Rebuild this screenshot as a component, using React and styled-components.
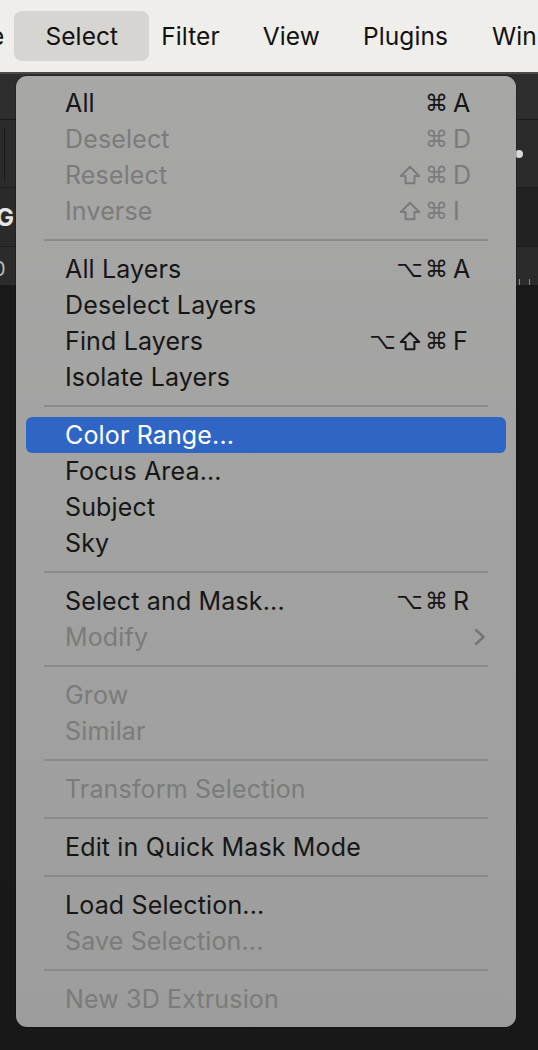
import React from "react";
import styled, { createGlobalStyle } from "styled-components";

const Global = createGlobalStyle`
  html, body { margin: 0; padding: 0; background: #181818; }
  body { font-family: Inter, "Noto Sans", "DejaVu Sans", sans-serif; -webkit-font-smoothing: antialiased; }
  #root { width: 538px; height: 1050px; overflow: hidden; }
`;

const Page = styled.div`
  position: relative;
  width: 538px;
  height: 1050px;
  background: #181818;
  overflow: hidden;
`;

const MenuBar = styled.div`
  height: 74px;
  background: #efeeea;
  border-bottom: 2px solid #4b4b4b;
  display: flex;
  align-items: center;
  box-sizing: border-box;
  white-space: nowrap;
`;

const BarItem = styled.div`
  flex: none;
  height: 50px;
  display: flex;
  align-items: center;
  padding: 0 ${(p) => p.$pad ?? 0}px;
  margin-left: ${(p) => p.$ml ?? 0}px;
  border-radius: 8px;
  font-size: 24.5px;
  letter-spacing: 0.1px;
  color: #111;
  background: ${(p) => (p.$active ? "#d6d5d1" : "transparent")};
`;

const Work = styled.div`
  display: flex;
  flex-direction: column;
`;

const Strip = styled.div`
  height: ${(p) => p.$h}px;
  background: ${(p) => p.$bg};
  border-bottom: ${(p) => (p.$line ? "1px solid #1b1b1b" : "none")};
  display: flex;
  justify-content: space-between;
  align-items: ${(p) => p.$align || "center"};
`;

const Side = styled.div`
  width: 16px;
  height: 100%;
  background: ${(p) => p.$bg || "transparent"};
  display: flex;
  align-items: ${(p) => p.$align || "center"};
  justify-content: flex-start;
  overflow: hidden;
  box-sizing: border-box;
`;

const RightSide = styled(Side)`
  width: 22px;
`;

const VLine = styled.div`
  width: 1px;
  height: 54px;
  margin-left: 4px;
  background: #1a1a1a;
`;

const Dot = styled.div`
  width: 8px;
  height: 8px;
  border-radius: 50%;
  background: #d9d9d9;
  margin-left: -1px;
`;

const StripText = styled.div`
  font-weight: 700;
  font-size: 24px;
  color: #e6e6e6;
  margin-left: -4px;
`;

const RulerText = styled.div`
  font-size: 20px;
  color: #bbb;
  margin-left: -7px;
  margin-top: 10px;
`;

const Ticks = styled.div`
  height: 6px;
  width: 100%;
  align-self: flex-end;
  background: repeating-linear-gradient(
    to right,
    transparent 0 3px,
    #8a8a8a 3px 4px,
    transparent 4px 10px
  );
`;

const Menu = styled.div`
  position: absolute;
  left: 16px;
  top: 76px;
  width: 500px;
  box-sizing: border-box;
  padding: 9px 10px 10px;
  border-radius: 11px;
  background: linear-gradient(#a7a7a6, #9c9d9c);
  box-shadow: 0 0 0 0.5px rgba(0, 0, 0, 0.35);
`;

const Row = styled.div`
  height: 36px;
  display: flex;
  align-items: center;
  border-radius: 6px;
  padding-left: 39px;
  font-size: 25px;
  letter-spacing: 0.15px;
  color: ${(p) => (p.$active ? "#ffffff" : p.$disabled ? "#7b7b7b" : "#161616")};
  background: ${(p) => (p.$active ? "#2f66c6" : "transparent")};
`;

const Label = styled.div`
  flex: 1;
  white-space: nowrap;
`;

const Shortcut = styled.div`
  display: flex;
  align-items: center;
`;

const Mod = styled.span`
  width: 27px;
  height: 36px;
  display: flex;
  align-items: center;
  justify-content: center;
  font-family: "DejaVu Sans", sans-serif;
  font-size: 23px;
`;

const Key = styled.span`
  width: 56px;
  padding-left: 3px;
  box-sizing: border-box;
  font-size: 25px;
`;

const Chevron = styled.div`
  width: 32px;
  display: flex;
  justify-content: flex-start;
`;

const Sep = styled.div`
  height: 22px;
  display: flex;
  align-items: center;
  padding: 0 18px;
  &::after {
    content: "";
    flex: 1;
    height: 1.5px;
    background: #8a8a8a;
  }
`;

function ShiftGlyph() {
  return (
    <svg width="22" height="20" viewBox="0 0 22 20">
      <path
        d="M11 1.8 L20.2 11 H15.4 V18.2 H6.6 V11 H1.8 Z"
        fill="none"
        stroke="currentColor"
        strokeWidth="2"
        strokeLinejoin="round"
      />
    </svg>
  );
}

const MODS = { cmd: "\u2318", opt: "\u2325" };

function Item({ label, mods = [], k, disabled, active, sub }) {
  return (
    <Row $disabled={disabled} $active={active}>
      <Label>{label}</Label>
      {k && (
        <Shortcut>
          {mods.map((m) => (
            <Mod key={m}>{m === "shift" ? <ShiftGlyph /> : MODS[m]}</Mod>
          ))}
          <Key>{k}</Key>
        </Shortcut>
      )}
      {sub && (
        <Chevron>
          <svg width="12" height="18" viewBox="0 0 12 18">
            <path d="M2 2 L9.5 9 L2 16" fill="none" stroke="#757575" strokeWidth="2.4" strokeLinecap="round" strokeLinejoin="round" />
          </svg>
        </Chevron>
      )}
    </Row>
  );
}

const groups = [
  [
    { label: "All", mods: ["cmd"], k: "A" },
    { label: "Deselect", mods: ["cmd"], k: "D", disabled: true },
    { label: "Reselect", mods: ["shift", "cmd"], k: "D", disabled: true },
    { label: "Inverse", mods: ["shift", "cmd"], k: "I", disabled: true },
  ],
  [
    { label: "All Layers", mods: ["opt", "cmd"], k: "A" },
    { label: "Deselect Layers" },
    { label: "Find Layers", mods: ["opt", "shift", "cmd"], k: "F" },
    { label: "Isolate Layers" },
  ],
  [
    { label: "Color Range...", active: true },
    { label: "Focus Area..." },
    { label: "Subject" },
    { label: "Sky" },
  ],
  [
    { label: "Select and Mask...", mods: ["opt", "cmd"], k: "R" },
    { label: "Modify", disabled: true, sub: true },
  ],
  [
    { label: "Grow", disabled: true },
    { label: "Similar", disabled: true },
  ],
  [{ label: "Transform Selection", disabled: true }],
  [{ label: "Edit in Quick Mask Mode" }],
  [
    { label: "Load Selection..." },
    { label: "Save Selection...", disabled: true },
  ],
  [{ label: "New 3D Extrusion", disabled: true }],
];

export default function App() {
  return (
    <Page>
      <Global />
      <MenuBar>
        <BarItem $ml={-10}>e</BarItem>
        <BarItem $active $ml={10} $pad={31}>Select</BarItem>
        <BarItem $ml={12}>Filter</BarItem>
        <BarItem $ml={43}>View</BarItem>
        <BarItem $ml={43}>Plugins</BarItem>
        <BarItem $ml={44}>Window</BarItem>
      </MenuBar>
      <Work>
        <Strip $h={45} $bg="#2d2d2d" $line />
        <Strip $h={67} $bg="#2b2b2b" $line>
          <Side>
            <VLine />
          </Side>
          <RightSide>
            <Dot />
          </RightSide>
        </Strip>
        <Strip $h={58} $bg="#2a2a2a" $line>
          <Side>
            <StripText>G</StripText>
          </Side>
          <RightSide $bg="#222222" />
        </Strip>
        <Strip $h={38} $bg="#2b2b2b" $align="stretch">
          <Side $align="flex-start">
            <RulerText>0</RulerText>
          </Side>
          <RightSide $align="flex-end">
            <Ticks />
          </RightSide>
        </Strip>
        <Strip $h={600} $bg="#191919" />
      </Work>
      <Menu>
        {groups.map((g, gi) => (
          <React.Fragment key={gi}>
            {gi > 0 && <Sep />}
            {g.map((it) => (
              <Item key={it.label} {...it} />
            ))}
          </React.Fragment>
        ))}
      </Menu>
    </Page>
  );
}
